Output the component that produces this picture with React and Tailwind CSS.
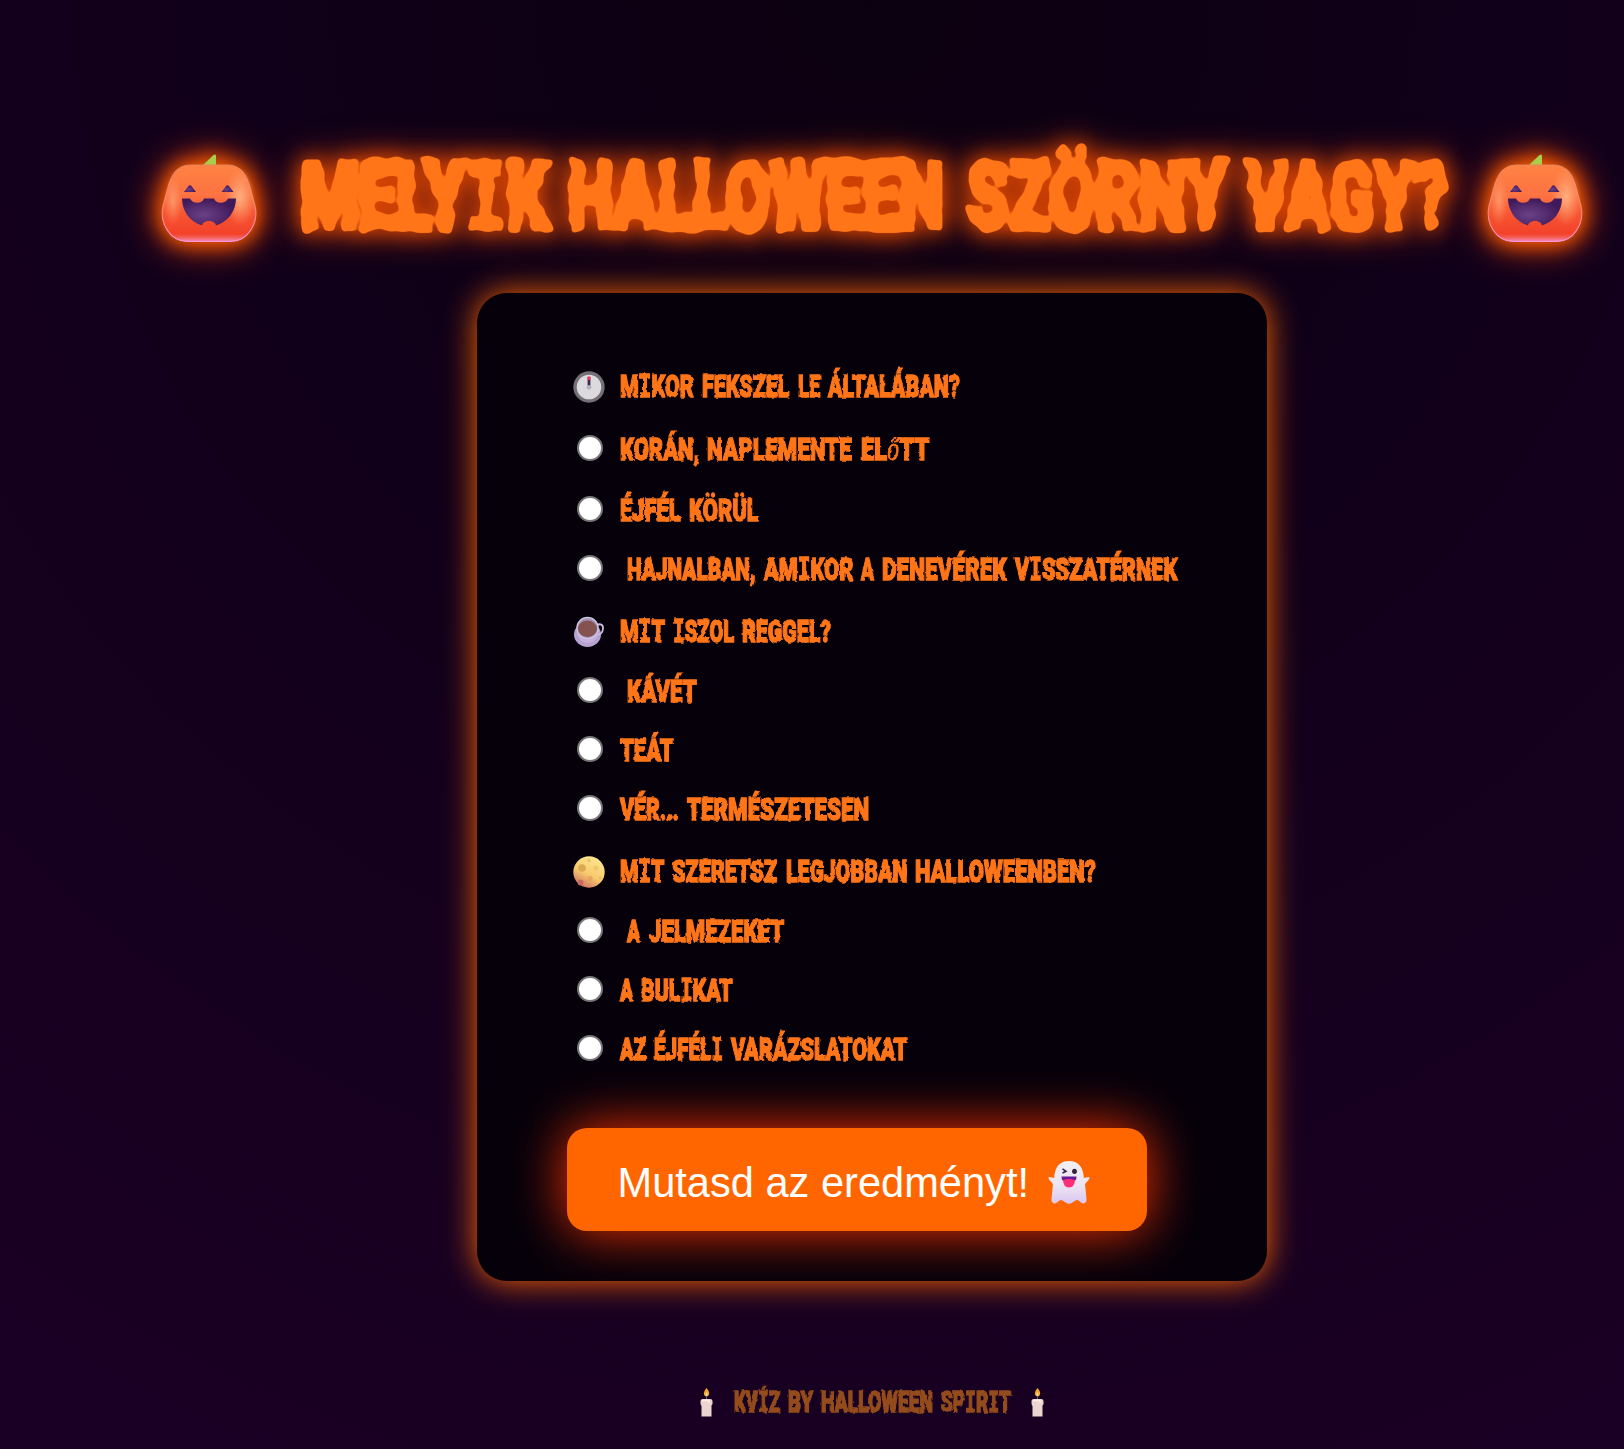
import { useLayoutEffect, useRef } from "react";

function Word({ text, width, size, className = "" }) {
  const ref = useRef(null);
  useLayoutEffect(() => {
    const el = ref.current;
    el.style.transform = `scaleX(${width / el.offsetWidth})`;
  }, [text, width]);
  return (
    <span className="block shrink-0" style={{ width }}>
      <span
        ref={ref}
        className={"inline-block origin-left whitespace-pre leading-none " + className}
        style={{ fontSize: size }}
      >
        {[...text].map((c, i) =>
          c === "I" || c === "Í" ? (
            <span key={i} className="font-['DejaVu_Sans_Mono'] text-[0.97em] leading-none">{c}</span>
          ) : c === "ő" ? (
            <span key={i} className="font-medium italic font-['Open_Sans'] text-[0.92em] leading-none [-webkit-text-stroke:0.800px_#ff7518]">{c}</span>
          ) : (
            c
          )
        )}
      </span>
    </span>
  );
}

function Pumpkin({ id }) {
  return (
    <svg
      width="96"
      height="88"
      viewBox="0 0 96 88"
      className="shrink-0 overflow-visible [filter:drop-shadow(0_0_10px_#ff6600)_drop-shadow(0_0_16px_#ff4400)]"
    >
      <defs>
        <linearGradient id={id + "b"} x1="0" y1="0" x2="0" y2="1">
          <stop offset="0" stopColor="#ff8243" />
          <stop offset="0.4" stopColor="#fd7242" />
          <stop offset="0.7" stopColor="#f5502f" />
          <stop offset="0.9" stopColor="#f3422a" />
          <stop offset="0.95" stopColor="#f4605c" />
          <stop offset="1" stopColor="#f58bc4" />
        </linearGradient>
        <radialGradient id={id + "h"} cx="0.5" cy="0.5" r="0.5">
          <stop offset="0" stopColor="#ffb082" />
          <stop offset="1" stopColor="#ffa070" stopOpacity="0" />
        </radialGradient>
        <radialGradient id={id + "m"} cx="0.4" cy="0.6" r="0.6">
          <stop offset="0" stopColor="#6a4186" />
          <stop offset="1" stopColor="#40195a" />
        </radialGradient>
        <linearGradient id={id + "r"} x1="0" y1="0" x2="0" y2="1">
          <stop offset="0" stopColor="#e5825c" />
          <stop offset="0.6" stopColor="#f08478" />
          <stop offset="1" stopColor="#fb96dc" />
        </linearGradient>
      </defs>
      <path d="M42 11 52.500 1Q55 -.5 55 2V12H42Z" fill="#a9cc4b" />
      <path
        d="M30 11H66C78 11 84 18 88 30L94 52C98 70 86 87.500 70 87.500H26C10 87.500-2 70 2 52L8 30C12 18 18 11 30 11Z"
        fill={`url(#${id}b)`}
        stroke={`url(#${id}r)`}
        strokeWidth="1.2"
      />
      <ellipse cx="79" cy="43" rx="15" ry="29" fill={`url(#${id}h)`} />
      <ellipse cx="12" cy="47" rx="9" ry="25" fill={`url(#${id}h)`} opacity="0.6" />
      <g fill={`url(#${id}m)`}>
        <path d="M23 38 27.500 32Q29 30.500 30.500 32L35 38Z" />
        <path d="M60.500 38 65 32Q66.500 30.500 68 32L72.500 38Z" />
        <path d="M21 44.500H29C31 50 41 50.500 43 44.500H53C55 50.500 65 50 67 44.500H75C75 57 67 68 55 71.500C54 65.500 42 65.500 41 71.500C29 68 21 57 21 44.500Z" />
      </g>
    </svg>
  );
}

function Clock() {
  return (
    <svg width="32" height="32" viewBox="0 0 32 32">
      <circle cx="16" cy="16" r="14" fill="#dcd9df" stroke="#737076" strokeWidth="3.4" />
      <path d="M16 6V15" stroke="#3b2b4e" strokeWidth="2.800" />
      <path d="M16 5.500V9" stroke="#ef3850" strokeWidth="2.600" />
      <circle cx="16" cy="16.300" r="2.400" fill="#b6b1ba" />
    </svg>
  );
}

function Coffee() {
  return (
    <svg width="32" height="32" viewBox="0 0 32 32">
      <ellipse cx="14.500" cy="18.500" rx="13.500" ry="12.500" fill="#b7a2d2" />
      <path d="M4 13C4 22 8 27 14.500 27S25 22 25 13Z" fill="#c4b1dc" />
      <path d="M23.500 9.500C27 7 30.500 8.500 30 13S27 19 23.500 18.500" fill="none" stroke="#c9bcdc" strokeWidth="1.800" />
      <circle cx="14.500" cy="12" r="10.600" fill="#a493b8" stroke="#d0c5e0" strokeWidth="1.200" />
      <ellipse cx="14.500" cy="12.800" rx="9.500" ry="8.200" fill="#84524f" />
    </svg>
  );
}

function Moon() {
  return (
    <svg width="32" height="32" viewBox="0 0 32 32">
      <defs>
        <linearGradient id="moon" x1="0.8" y1="0" x2="0.3" y2="1">
          <stop offset="0" stopColor="#ffe893" />
          <stop offset="0.6" stopColor="#f6c96c" />
          <stop offset="1" stopColor="#cf7365" />
        </linearGradient>
      </defs>
      <circle cx="16" cy="16" r="15.700" fill="url(#moon)" />
      <circle cx="9" cy="12" r="3.800" fill="#dba953" />
      <circle cx="23" cy="12" r="2.600" fill="#f0c76d" />
      <circle cx="16" cy="4.500" r="1.800" fill="#ebc36a" />
      <circle cx="17" cy="22.500" r="2.600" fill="#e7a461" />
      <circle cx="7.500" cy="26.500" r="3" fill="#c76b62" />
      <circle cx="27" cy="22" r="1.300" fill="#eab963" />
    </svg>
  );
}

function Ghost() {
  return (
    <svg width="42" height="44" viewBox="0 0 42 44">
      <defs>
        <linearGradient id="ghost" x1="0" y1="0" x2="0" y2="1">
          <stop offset="0" stopColor="#f3f0f4" />
          <stop offset="0.6" stopColor="#ebe3f2" />
          <stop offset="1" stopColor="#dac6f0" />
        </linearGradient>
      </defs>
      <path
        d="M21 1C11 1 6.500 8 6.200 18L1.500 17C0 17 .5 19 1.500 20L5 24 3.500 39C3 43 6 44.500 9 42.500L11.500 40.500Q13 39.500 14.500 40.500L18 42.800Q21 44.500 24 42.800L27.500 40.500Q29 39.500 30.500 40.500L33 42.500C36 44.500 39 43 38.500 39L37 24 40.500 20C41.500 19 42 17 40.500 17L35.800 18C35.500 8 31 1 21 1Z"
        fill="url(#ghost)"
      />
      <path d="M14.500 8.800 18 11.300 14.500 13" fill="none" stroke="#3b2448" strokeWidth="1.600" />
      <ellipse cx="26.500" cy="11.300" rx="2.400" ry="2.600" fill="#33223d" />
      <path d="M15 19H27C27 24 25 27.500 21 27.500S15 24 15 19Z" fill="#ff2e78" />
      <path d="M13.500 16.500H28.500Q28.500 19 27.500 20.500C24 18.500 18 18.500 14.500 20.500Q13.500 19 13.500 16.500Z" fill="#681b95" />
    </svg>
  );
}

function Candle() {
  return (
    <svg width="13" height="29" viewBox="0 0 13 29" className="shrink-0">
      <path d="M6.500 0C9 3 9.500 5 9 6.500 8 9 5 9 4 6.500 3.500 4.500 4.500 2.500 6.500 0Z" fill="#f7a535" />
      <path d="M6.500 4Q8.500 7 6.500 8 4.500 7 6.500 4Z" fill="#ffe28a" />
      <path d="M6.500 8V12" stroke="#7b6068" />
      <path d="M.5 13Q.5 11 3 11H10Q12.500 11 12.500 13V16Q12 17.500 11.500 17V28.500H1.500V18Q.5 17 .5 15Z" fill="#ecd5d0" />
      <path d="M2 12.500H9V15" fill="none" stroke="#fbeee4" strokeWidth="1.500" />
    </svg>
  );
}

const ROWS = [
  { icon: Clock, words: [["MIKOR", 74], ["FEKSZEL", 87.5], ["LE", 22], ["ÁLTALÁBAN?", 132]] },
  { top: "mt-[23px]", words: [["KORÁN,", 79.5], ["NAPLEMENTE", 145], ["ELőTT", 68]] },
  { top: "mt-[21px]", words: [["ÉJFÉL", 61], ["KÖRÜL", 70]] },
  { top: "mt-[19px]", indent: true, words: [["HAJNALBAN,", 128.5], ["AMIKOR", 89], ["A", 13], ["DENEVÉREK", 124.5], ["VISSZATÉRNEK", 162]] },
  { top: "mt-[22px]", icon: Coffee, words: [["MIT", 45], ["ISZOL", 61], ["REGGEL?", 89]] },
  { top: "mt-[20px]", indent: true, words: [["KÁVÉT", 70]] },
  { top: "mt-[19px]", words: [["TEÁT", 53.5]] },
  { top: "mt-[19px]", words: [["VÉR...", 59], ["TERMÉSZETESEN", 182]] },
  { top: "mt-[22px]", icon: Moon, words: [["MIT", 44.5], ["SZERETSZ", 105], ["LEGJOBBAN", 121.5], ["HALLOWEENBEN?", 181]] },
  { top: "mt-[20px]", indent: true, words: [["A", 13.5], ["JELMEZEKET", 135.5]] },
  { top: "mt-[19px]", words: [["A", 13.5], ["BULIKAT", 92]] },
  { top: "mt-[19px]", words: [["AZ", 26], ["ÉJFÉLI", 69], ["VARÁZSLATOKAT", 176.5]] },
];

const TITLE = "[-webkit-text-stroke:6px_#ff7518]";
const LINE = "[-webkit-text-stroke:1.500px_#ff7518]";
const FOOT = "[-webkit-text-stroke:1.500px_#944c1c]";

export default function App() {
  return (
    <div className="h-[1449px] w-[1624px] overflow-hidden bg-[radial-gradient(circle_at_872px_0,#0b0010_0%,#13001c_50%,#1a0024_95%)] font-[Roboto,sans-serif] font-black text-[#ff7518]">
      <svg width="0" height="0" className="block h-0 w-0">
        <filter id="rough" x="-5%" y="-20%" width="110%" height="140%" colorInterpolationFilters="sRGB">
          <feTurbulence type="fractalNoise" baseFrequency="0.18" numOctaves="1" seed="4" />
          <feDisplacementMap in="SourceGraphic" scale="3.2" xChannelSelector="R" yChannelSelector="G" />
        </filter>
        <filter id="drip" x="-5%" y="-20%" width="110%" height="140%" colorInterpolationFilters="sRGB">
          <feTurbulence type="fractalNoise" baseFrequency="0.07" numOctaves="1" seed="7" />
          <feDisplacementMap in="SourceGraphic" scale="11" xChannelSelector="R" yChannelSelector="G" />
          <feGaussianBlur stdDeviation="2.2" result="soft" />
          <feComponentTransfer in="soft" result="edge">
            <feFuncA type="linear" slope="5" intercept="-2" />
          </feComponentTransfer>
          <feFlood floodColor="#ff7518" />
          <feComposite operator="in" in2="edge" />
        </filter>
      </svg>

      <header className="flex h-[293px] items-start pl-[161px] pt-[154px]">
        <Pumpkin id="pl" />
        <div className="ml-[43px] mt-[-4px] [filter:drop-shadow(0_0_10px_#f05000c0)_drop-shadow(0_0_15px_#e84400d0)]">
          <h1 className="flex [filter:url(#drip)]">
            <Word text="MELYIK" width={249} size={94} className={TITLE} />
            <span className="w-[19px]" />
            <Word text="HALLOWEEN" width={376} size={94} className={TITLE} />
            <span className="w-[23px]" />
            <Word text="SZÖRNY" width={260} size={94} className={TITLE} />
            <span className="w-[18px]" />
            <Word text="VAGY?" width={203} size={94} className={TITLE} />
          </h1>
        </div>
        <span className="ml-auto mr-[41px] block">
          <Pumpkin id="pr" />
        </span>
      </header>

      <main className="ml-[477px] h-[988px] w-[790px] rounded-[30px] bg-[#05000a] pt-[73px] shadow-[0_0_32px_#ff6600]">
        <form>
          {ROWS.map(({ icon: Icon, words, top = "", indent }, i) => (
            <div key={i} className={"flex h-10 items-center pl-[96px] " + top}>
              <span className="flex w-[46.500px] shrink-0">
                {Icon ? (
                  <span className="mt-px"><Icon /></span>
                ) : (
                  <input
                    type="radio"
                    name={"q" + Math.floor(i / 4)}
                    className="mb-[3px] ml-1 size-[26px] appearance-none rounded-full border-2 border-[#767676] bg-white"
                  />
                )}
              </span>
              <span className={"mt-[2px] flex gap-[8.300px] [filter:url(#rough)] " + (indent ? "ml-[7.500px]" : "")}>
                {words.map(([text, width], j) => (
                  <Word key={j} text={text} width={width} size={32} className={LINE} />
                ))}
              </span>
            </div>
          ))}
          <button
            type="button"
            className="ml-[90px] mt-[59px] flex h-[103px] w-[580px] items-center rounded-[20px] bg-[#ff6600] pl-[50.500px] font-['Liberation_Sans',sans-serif] text-[41.600px] font-normal text-white shadow-[0_0_54px_#ff3300]"
          >
            <span className="mt-[8px]">Mutasd az eredményt!</span>
            <span className="ml-auto mr-[57px] mt-[4px]">
              <Ghost />
            </span>
          </button>
        </form>
      </main>

      <footer className="ml-[700px] mt-[104px] flex h-[34px] items-center">
        <Candle />
        <p className="ml-[21px] mt-[2px] flex w-[277px] justify-between text-[#944c1c] [filter:url(#rough)]">
          <Word text="KVÍZ" width={46} size={29} className={FOOT} />
          <Word text="BY" width={25} size={29} className={FOOT} />
          <Word text="HALLOWEEN" width={112} size={29} className={FOOT} />
          <Word text="SPIRIT" width={70} size={29} className={FOOT} />
        </p>
        <span className="ml-[20px]">
          <Candle />
        </span>
      </footer>
    </div>
  );
}
